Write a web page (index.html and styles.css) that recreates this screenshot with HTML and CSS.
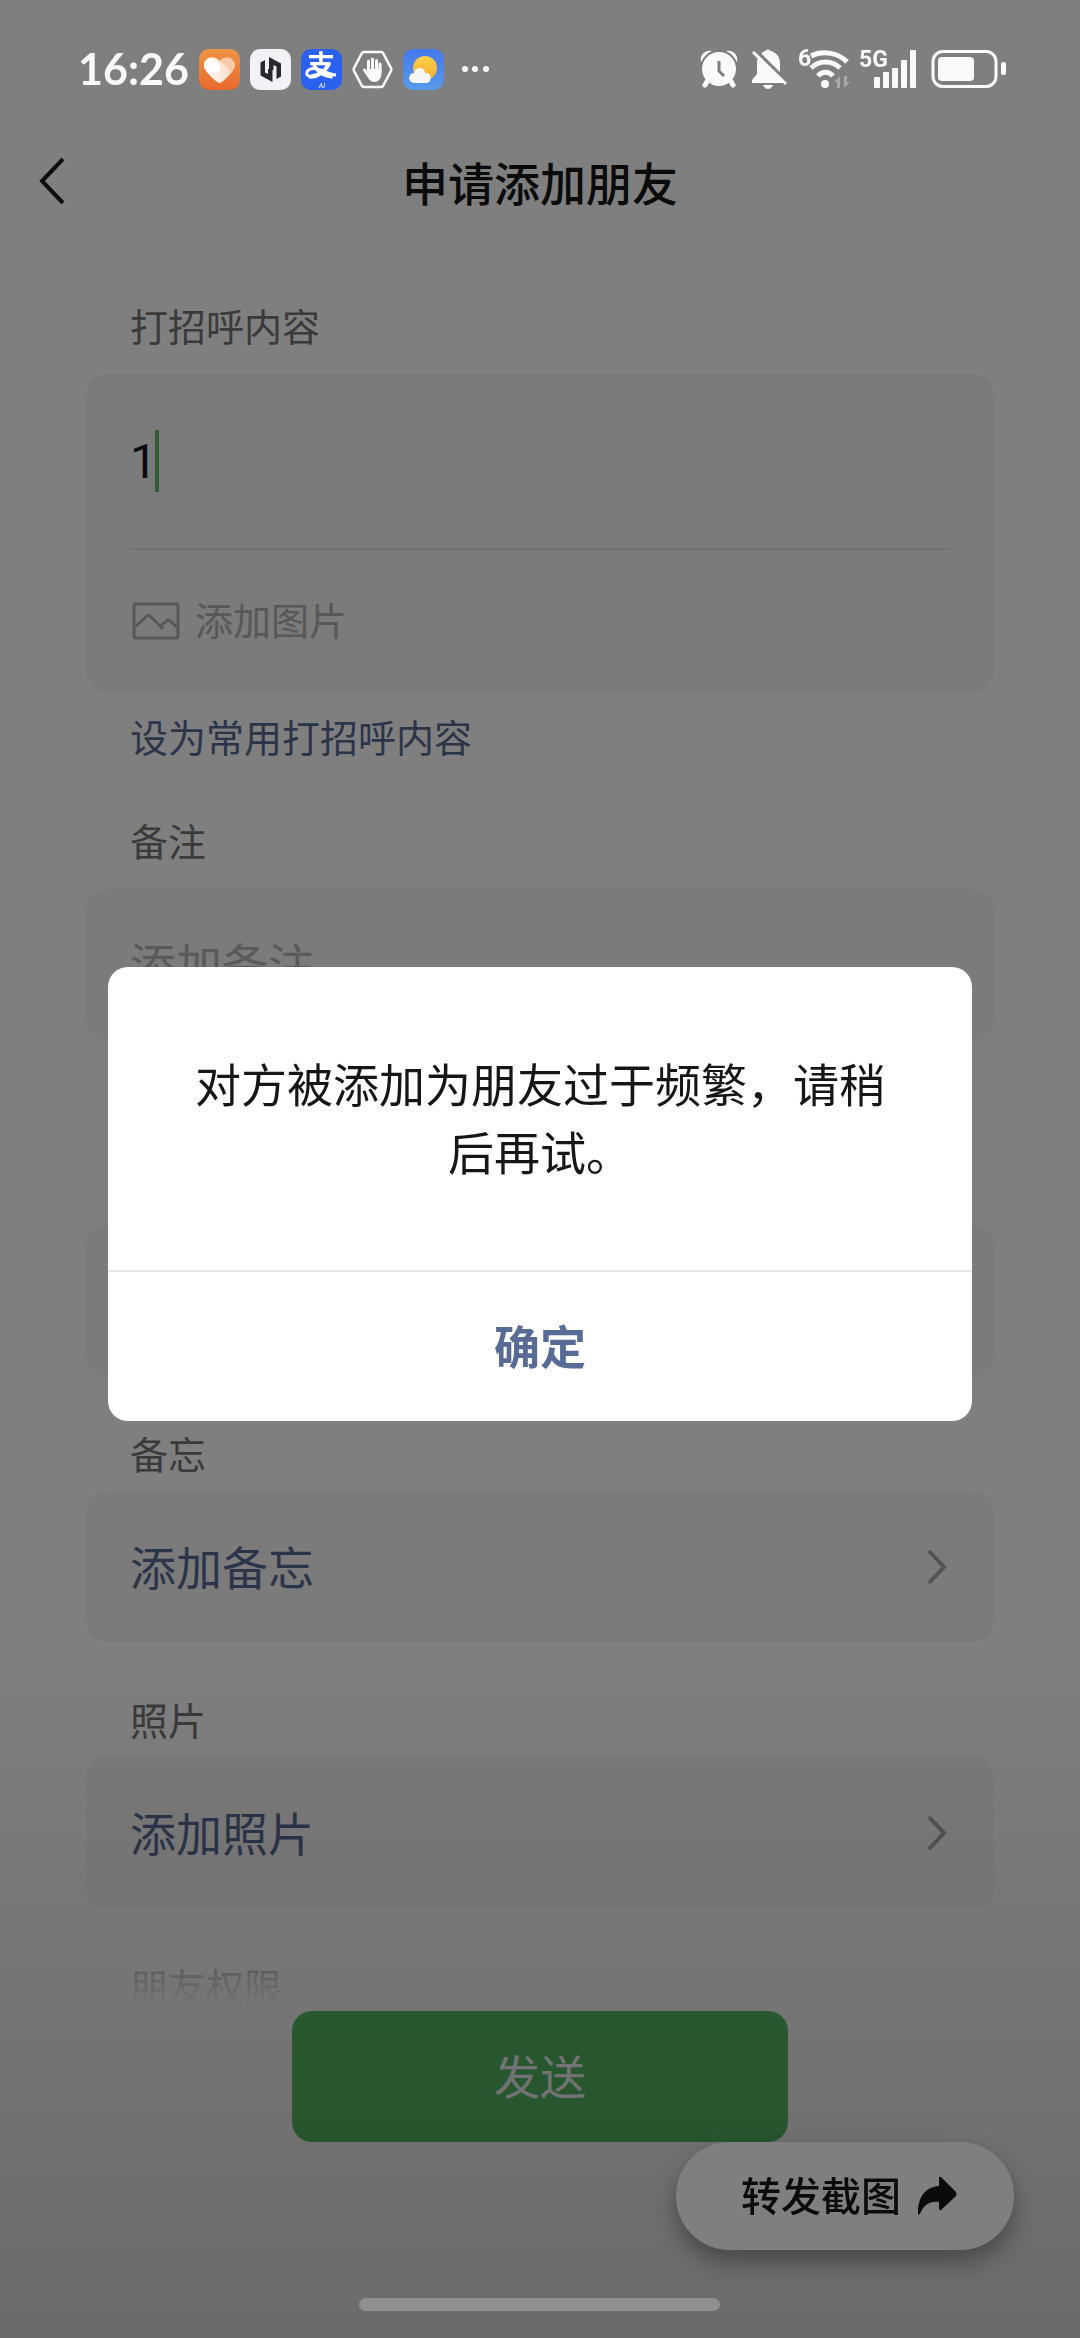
FILE: index.html
```
<!DOCTYPE html>
<html lang="zh-CN">

<head>
    <meta charset="UTF-8">
    <meta name="viewport" content="width=device-width, initial-scale=1.0">
    <title>申请添加朋友</title>
    <link rel="stylesheet" href="styles.css">
</head>

<body>

    <!-- ============ status bar ============ -->
    <header class="status">
        <div class="status-left">
            <span class="clock">16:26</span>
            <svg width="41" height="41" viewBox="0 0 41 41">
                <defs>
                    <linearGradient id="orange" x1="0" y1="0" x2="0" y2="1">
                        <stop offset="0" stop-color="#ee9545" />
                        <stop offset="1" stop-color="#e8692f" />
                    </linearGradient>
                    <linearGradient id="heart" x1="0" y1="0" x2="1" y2="0">
                        <stop offset="0" stop-color="#fff" />
                        <stop offset="1" stop-color="#fbdcc6" />
                    </linearGradient>
                </defs>
                <rect width="41" height="41" rx="10" fill="url(#orange)" />
                <path d="M20.5 34 C18.5 34 5 22 5 17 C4 9 15 5 20.5 12 C26 5 37 9 36 17 C36 22 22.5 34 20.5 34Z" fill="#f9cba9" />
                <path d="M20.5 34 C18.5 34 5 22 5 17 C4 9 15 5 20.5 12 L27 17 L32 24 C27 30 22 34 20.5 34Z" fill="url(#heart)" />
                <path d="M10.5 14 L17 19" stroke="#fff" stroke-width="9" stroke-linecap="round" />
            </svg>
            <svg width="41" height="41" viewBox="0 0 41 41">
                <rect width="41" height="41" rx="10" fill="#f1f2f5" />
                <g fill="#26282c">
                    <path d="M10.5 13.5 L15 11 V23.5 L18 25 V20 H22.5 V33 L10.5 26.5Z" />
                    <path d="M31 27.5 L26.5 30 V17.500 L23.5 16 V21 H19 V8 L31 14.5Z" />
                </g>
            </svg>
            <svg width="41" height="41" viewBox="0 0 41 41">
                <rect width="41" height="41" rx="10" fill="#2a61ee" />
                <text class="pay-mark" x="20" y="27" text-anchor="middle">支</text>
                <path d="M17 20 C3 17 3 29 12 28 C20 27 25 19 26 17 M16 20 C24 22 29 26 35 26" fill="none" stroke="#fff" stroke-width="3" />
                <text class="pay-ai" x="21" y="39" text-anchor="middle">AI</text>
            </svg>
            <svg width="41" height="41" viewBox="0 0 41 41" fill="none" stroke="#fafafa">
                <path d="M12 3 H29 Q30 3 31 4 L39 19 Q40 20.5 39 22 L31 37 Q30 38 29 38 H12 Q11 38 10 37 L2 22 Q1 20.5 2 19 L10 4 Q11 3 12 3Z" stroke-width="2.5" />
                <path d="M16.5 23 V12 M20.5 21 V10 M24.500 21 V11.5 M28 23 V15 M16 26 L12.5 21" stroke-width="3" stroke-linecap="round" />
                <path d="M15 20 H29.500 V24 C29.500 30 26 33 22 33 C18 33 16 29 14 25Z" fill="#fafafa" stroke="none" />
            </svg>
            <svg width="41" height="41" viewBox="0 0 41 41">
                <defs>
                    <linearGradient id="sky" x1="0" y1="0" x2="0" y2="1">
                        <stop offset="0" stop-color="#4377ee" />
                        <stop offset="1" stop-color="#5a9bea" />
                    </linearGradient>
                    <linearGradient id="sun" x1="0" y1="0" x2="0" y2="1">
                        <stop offset="0" stop-color="#fbd04c" />
                        <stop offset="1" stop-color="#f3ac2c" />
                    </linearGradient>
                </defs>
                <rect width="41" height="41" rx="10" fill="url(#sky)" />
                <circle cx="22" cy="19" r="12" fill="url(#sun)" />
                <path d="M12 34 C4 34 5 24 11 24 C12 17 22 18 22 24 C30 23 29 34 23 34Z" fill="#f7f7f5" />
            </svg>
            <svg width="44" height="41" viewBox="0 0 44 41" fill="#fafafa">
                <circle cx="11" cy="20" r="3" />
                <circle cx="21" cy="20" r="3" />
                <circle cx="32" cy="20" r="3" />
            </svg>
        </div>

        <div class="status-right">
            <svg width="42" height="48" viewBox="0 0 42 48">
                <g fill="#fafafa">
                    <path d="M1 17 A9 9 0 0 1 12 6 Q5 9 1 17Z M37 17 A9 9 0 0 0 26 6 Q33 9 37 17Z" />
                    <circle cx="19" cy="24" r="17" />
                </g>
                <path d="M8 35 L5 40 M30 35 L33 40" stroke="#fafafa" stroke-width="5" stroke-linecap="round" />
                <path d="M19 16 V26 L24 31" fill="none" stroke="#808080" stroke-width="3" />
            </svg>
            <svg width="36" height="48" viewBox="0 0 36 48">
                <path d="M13 6 Q16 3 19 6 C25 8 28 12 28 19 V30 L32 36 V38 H0 V35 L5 29 V18 C5 12 8 8 13 6Z" fill="#fafafa" />
                <path d="M11 40 H21 Q19 44 16 44 Q13 44 11 40Z" fill="#fafafa" />
                <path d="M3 5 L36 38" stroke="#808080" stroke-width="4" />
                <path d="M1 7 L34 39" stroke="#fafafa" stroke-width="3" />
            </svg>
            <svg width="53" height="48" viewBox="0 0 53 48">
                <text class="net-mark" x="0" y="21">6</text>
                <g fill="none" stroke="#fafafa" stroke-width="5">
                    <path d="M13 11 C25 5 41 8 49 17" />
                    <path d="M13 23 C21 15 34 15 42 23" />
                    <path d="M20 31 C24 26 31 26 35 31" />
                </g>
                <circle cx="27" cy="39" r="4" fill="#fafafa" />
                <path d="M36 37 L42 31 V43 H39 V37Z M46 31 V43 L52 37 H49 V31Z" fill="#a8a8a8" />
            </svg>
            <svg width="60" height="48" viewBox="0 0 60 48" fill="#fafafa">
                <text class="net-mark" x="-2" y="22">5G</text>
                <rect x="13" y="32" width="6" height="11" rx="1" />
                <rect x="22" y="27" width="6" height="16" rx="1" />
                <rect x="31" y="23" width="6" height="20" rx="1" />
                <rect x="40" y="15" width="6" height="28" rx="1" />
                <rect x="49" y="5" width="6" height="38" rx="1" />
            </svg>
            <svg width="75" height="48" viewBox="0 0 75 48">
                <rect x="2" y="6.5" width="63" height="35" rx="10" fill="none" stroke="#fafafa" stroke-width="3" />
                <rect x="7" y="12" width="36" height="24" rx="4" fill="#fafafa" />
                <rect x="70" y="17" width="5" height="13" rx="2" fill="#fafafa" />
            </svg>
        </div>
    </header>

    <!-- ============ page ============ -->
    <div class="app">
        <nav class="navbar">
            <button class="back" aria-label="返回">
                <svg width="28" height="48" viewBox="0 0 28 48" fill="none" stroke="#1c1c1c" stroke-width="4">
                    <path d="M24 2 L3 24 L24 46" />
                </svg>
            </button>
            <h1>申请添加朋友</h1>
        </nav>

        <main class="form">
            <label class="label" for="greeting">打招呼内容</label>
            <div class="card greeting">
                <div class="greeting-text">
                    <input type="text" id="greeting" value="1">
                    <span class="caret"></span>
                </div>
                <button class="add-image">
                    <svg width="48" height="38" viewBox="0 0 48 38" fill="none" stroke="currentColor" stroke-width="3">
                        <rect x="2" y="2" width="44" height="34" rx="2" />
                        <path d="M2 26 L15 14 Q16 13 18 14 L31 27 M28 24 L36 18 Q37 18 38 19 L46 26" />
                    </svg>
                    <span>添加图片</span>
                </button>
            </div>
            <a class="common-link" href="#">设为常用打招呼内容</a>

            <label class="label" for="remark">备注</label>
            <div class="card">
                <input type="text" id="remark" placeholder="添加备注">
            </div>

            <div class="card tags"></div>

            <h2 class="label tight">备忘</h2>
            <button class="card row">
                <span>添加备忘</span>
                <svg width="24" height="38" viewBox="0 0 24 38" fill="none" stroke="#a6a6a6" stroke-width="4">
                    <path d="M3 3 L18 19 L3 35" />
                </svg>
            </button>

            <h2 class="label tight">照片</h2>
            <button class="card row">
                <span>添加照片</span>
                <svg width="24" height="38" viewBox="0 0 24 38" fill="none" stroke="#a6a6a6" stroke-width="4">
                    <path d="M3 3 L18 19 L3 35" />
                </svg>
            </button>

            <h2 class="label tight">朋友权限</h2>
        </main>

        <footer class="footer">
            <button class="send">发送</button>
        </footer>
    </div>

    <button class="forward">
        <span>转发截图</span>
        <svg width="40" height="40" viewBox="0 0 40 40">
            <path d="M22 2 Q22 0 24 1 L39 16 Q40 18 39 20 L24 34 Q22 35 22 33 V26 C12 25 6 30 3 38 Q1 40 1 37 C1 20 9 11 22 10Z" fill="#161616" />
        </svg>
    </button>

    <!-- ============ dialog ============ -->
    <div class="mask">
        <div class="dialog" role="alertdialog" aria-modal="true" aria-labelledby="message">
            <p id="message">对方被添加为朋友过于频繁，请稍后再试。</p>
            <button class="confirm">确定</button>
        </div>
    </div>

    <div class="home-bar"></div>

</body>

</html>
```
FILE: styles.css
```
* {
    box-sizing: border-box;
}

body {
    margin: 0;
    background-color: #fff;
    font-family: "Noto Sans CJK SC", sans-serif;
    font-size: 46px;
    color: #161616;
}

button,
input {
    margin: 0;
    padding: 0;
    border: none;
    outline: none;
    background: none;
    font: inherit;
    color: inherit;
}

button {
    cursor: pointer;
}

/* the CJK font sits low in its line box */
button span {
    padding-bottom: 4px;
}

svg {
    display: block;
    flex-shrink: 0;
    overflow: visible;
}

/* status bar stays bright over the mask */
.status {
    position: fixed;
    top: 0;
    left: 0;
    right: 0;
    z-index: 3;
    display: flex;
    justify-content: space-between;
    align-items: center;
    height: 138px;
    padding: 0 74px 0 78px;
    color: #fafafa;
}

.status-left,
.status-right {
    display: flex;
    align-items: center;
    gap: 10px;
}

.clock {
    width: 111px;
    font-family: Lato, sans-serif;
    font-size: 43px;
    font-weight: bold;
    line-height: 48px;
    white-space: nowrap;
}

.pay-mark {
    font-size: 28px;
    font-weight: bold;
    fill: #fff;
}

.pay-ai {
    font-family: Roboto, sans-serif;
    font-size: 7px;
    font-style: italic;
    fill: #fff;
}

.net-mark {
    font-family: Roboto, sans-serif;
    font-size: 23px;
    font-weight: bold;
    fill: #fafafa;
}

.app {
    position: relative;
    display: flex;
    flex-direction: column;
    height: 100vh;
    padding-top: 138px;
}

/* shade at the bottom of the screen */
.app::after {
    content: "";
    position: absolute;
    left: 0;
    right: 0;
    bottom: 0;
    height: 30%;
    background: linear-gradient(rgba(0, 0, 0, 0), rgba(0, 0, 0, 0.16));
    pointer-events: none;
}

.navbar {
    display: grid;
    grid-template-columns: 100px 1fr 100px;
    align-items: center;
    height: 86px;
}

.back {
    padding-left: 39px;
}

h1 {
    margin: 0;
    font-size: 46px;
    font-weight: 500;
    line-height: 68px;
    text-align: center;
}

.form {
    position: relative;
    flex: 1;
    min-height: 0;
    overflow: hidden;
    padding: 75px 86px 0;
}

.form::after {
    content: "";
    position: absolute;
    left: 0;
    right: 0;
    bottom: 0;
    height: 100px;
    background: linear-gradient(rgba(255, 255, 255, 0), #fff 95%);
}

.label {
    display: block;
    margin: 52px 44px 23px;
    font-size: 38px;
    font-weight: normal;
    line-height: 52px;
    color: #747474;
}

.label:first-child {
    margin-top: 0;
}

.label.tight {
    margin: 51px 44px 12px;
}

.card {
    display: flex;
    align-items: center;
    width: 100%;
    height: 151px;
    padding: 0 44px;
    border-radius: 20px;
    background-color: #f7f7f7;
}

.card input {
    width: 100%;
    height: 68px;
    padding-bottom: 6px;
}

.card input::placeholder {
    color: #b4b4b4;
    opacity: 1;
}

.card.greeting {
    flex-direction: column;
    align-items: stretch;
    height: auto;
}

.greeting-text {
    position: relative;
    display: flex;
    align-items: center;
    height: 176px;
    border-bottom: 2px solid #e4e4e4;
}

.greeting-text input {
    padding: 0;
    font-family: Roboto, "Noto Sans CJK SC", sans-serif;
    font-size: 48px;
}

.caret {
    position: absolute;
    left: 25px;
    width: 4px;
    height: 62px;
    background-color: #62bd6e;
}

.add-image {
    display: flex;
    align-items: center;
    gap: 15px;
    height: 141px;
    padding-left: 2px;
    font-size: 38px;
    color: #b0b0b0;
}

.common-link {
    display: block;
    margin: 19px 44px 0;
    font-size: 38px;
    line-height: 52px;
    color: #576b95;
    text-decoration: none;
}

.tags {
    margin-top: 185px;
}

.row {
    justify-content: space-between;
    color: #576b95;
}

.footer {
    display: flex;
    justify-content: center;
    align-items: flex-start;
    height: 327px;
}

.send {
    width: 46%;
    height: 131px;
    padding-bottom: 6px;
    border-radius: 20px;
    background-color: #58c169;
    color: #fff;
}

.forward {
    position: fixed;
    right: 66px;
    bottom: 88px;
    display: flex;
    align-items: center;
    gap: 16px;
    height: 108px;
    padding: 0 57px 0 65px;
    border-radius: 54px;
    background-color: #fff;
    box-shadow: 0 12px 24px rgba(0, 0, 0, 0.35);
    font-size: 40px;
    font-weight: 500;
}

.mask {
    position: fixed;
    inset: 0;
    z-index: 2;
    display: flex;
    justify-content: center;
    align-items: center;
    padding-top: 50px;
    background-color: rgba(0, 0, 0, 0.5);
}

.dialog {
    width: 80%;
    border-radius: 20px;
    background-color: #fff;
    overflow: hidden;
}

.dialog p {
    margin: 0;
    padding: 81px 80px 86px;
    line-height: 68px;
    text-align: center;
}

.confirm {
    width: 100%;
    height: 151px;
    padding-bottom: 6px;
    border-top: 2px solid #e5e5e5;
    font-weight: bold;
    color: #576b95;
}

.home-bar {
    position: fixed;
    left: 50%;
    bottom: 27px;
    z-index: 3;
    width: 361px;
    height: 13px;
    margin-left: -181px;
    border-radius: 7px;
    background-color: #8f8f8f;
}
```
